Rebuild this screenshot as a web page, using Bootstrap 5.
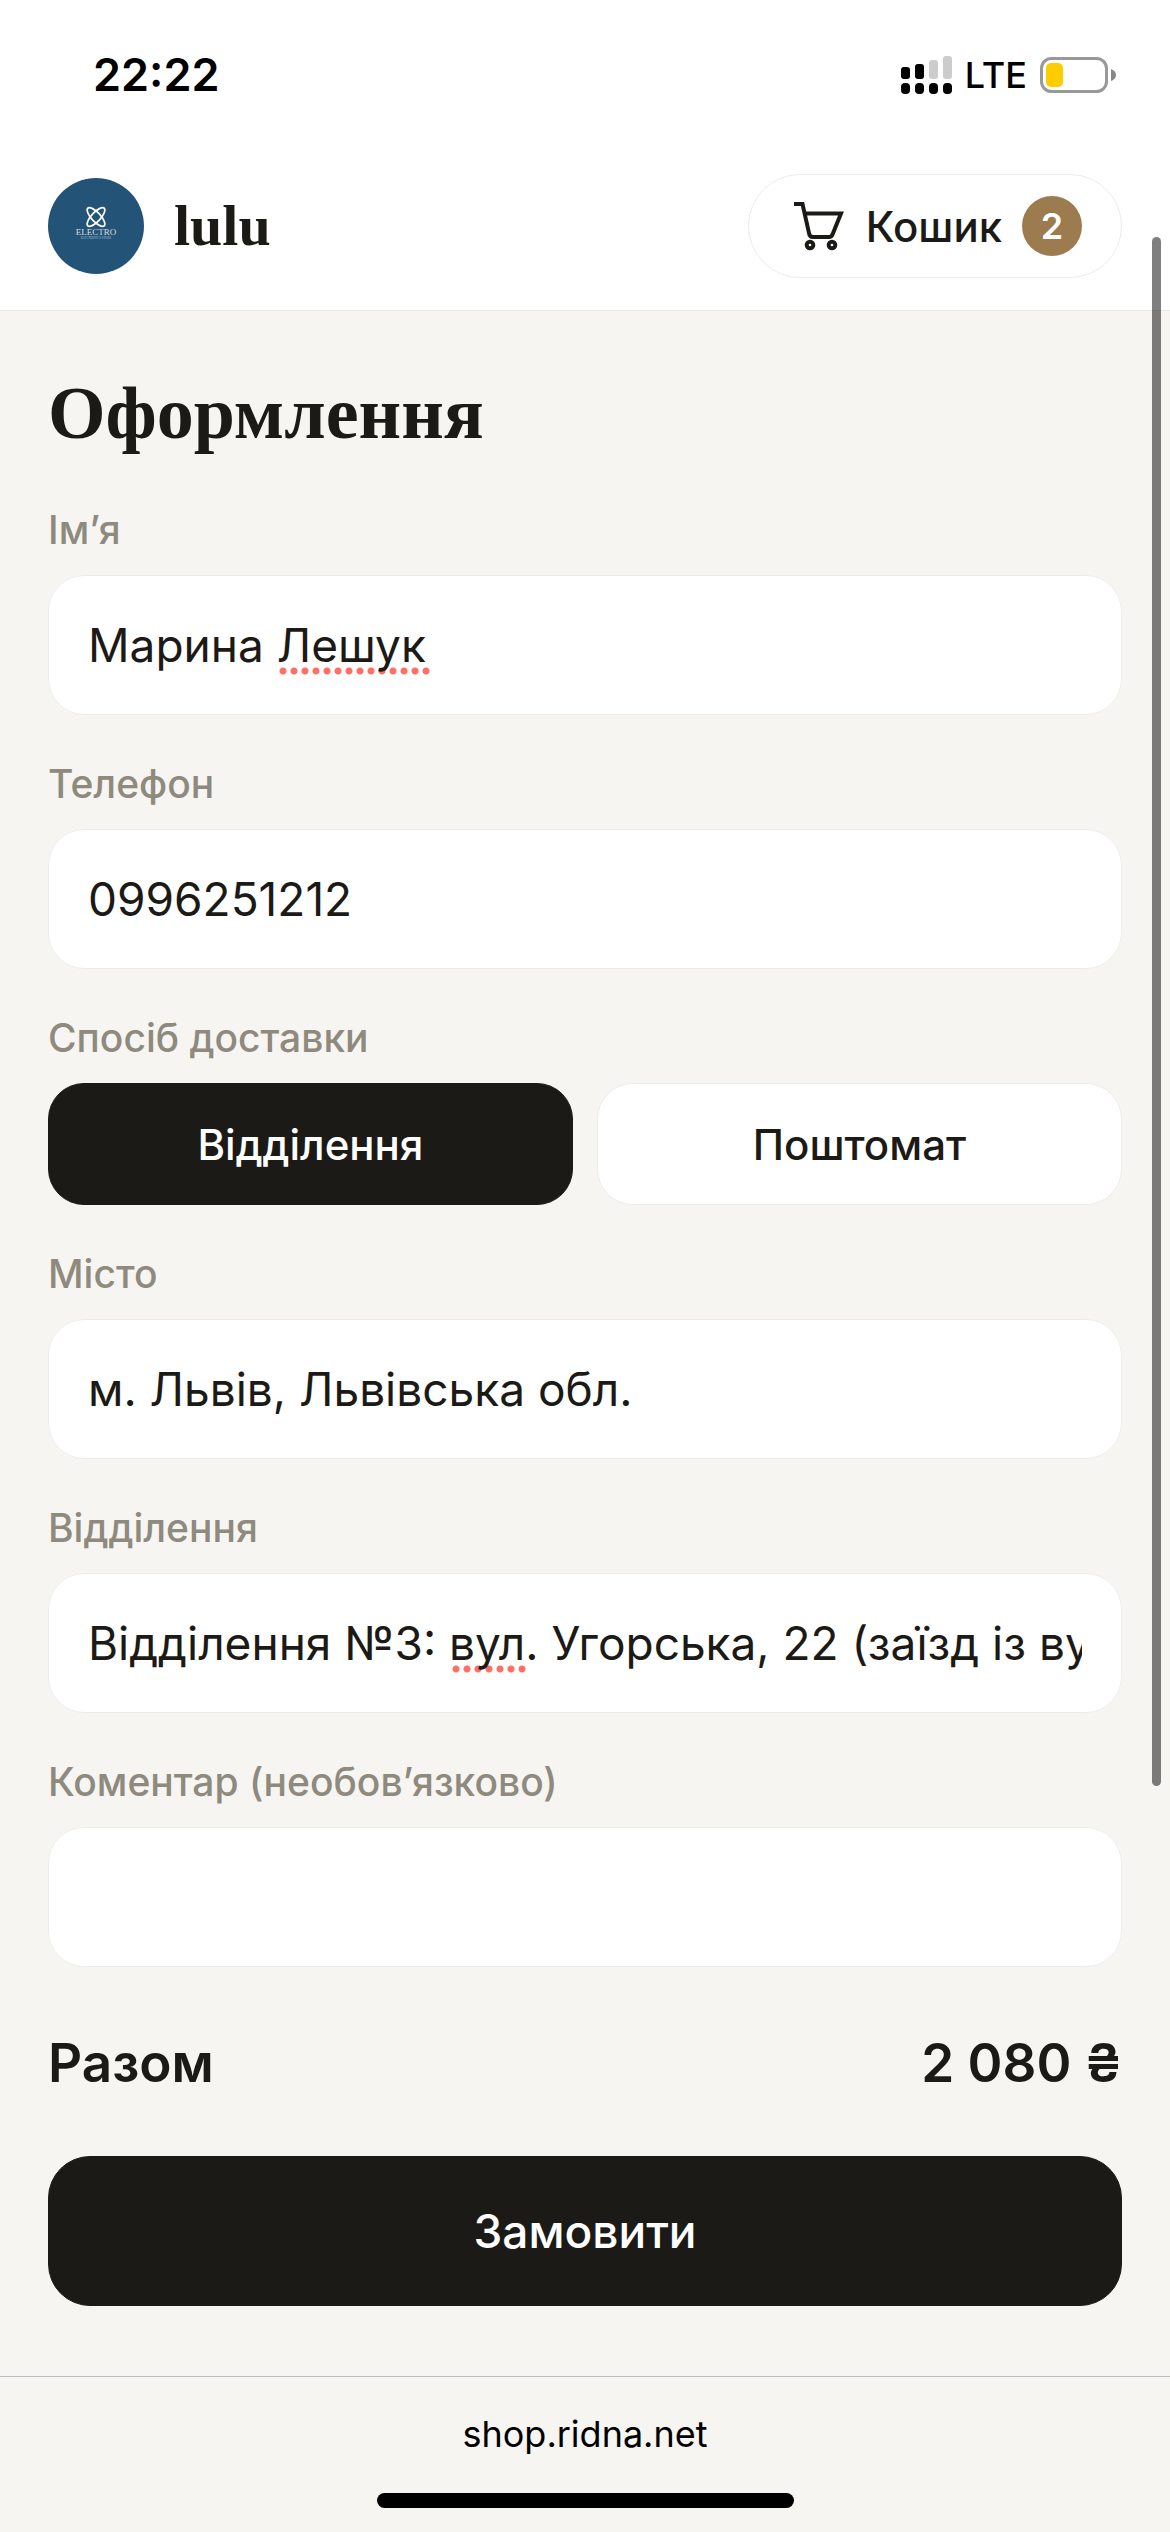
<!DOCTYPE html>
<html lang="uk">
<head>
<meta charset="utf-8">
<meta name="viewport" content="width=device-width, initial-scale=1">
<title>Оформлення – lulu</title>
<link rel="stylesheet" href="https://cdn.jsdelivr.net/npm/bootstrap@5.3.0/dist/css/bootstrap.min.css">
<style>
  :root { --ink: #1c1a16; --paper: #f6f5f1; --muted: #8e8a7d; --line: #ececec; --accent: #9c7b4e; --side: 48px; }
  body { background: var(--paper); color: var(--ink); font-family: Inter, "Noto Sans", sans-serif; font-size: 46px; }
  .status-bar { height: 150px; padding: 0 54px 0 93px; color: #000; }
  .clock { font-size: 45px; line-height: 60px; font-weight: 600; }
  .indicators { gap: 13px; }
  .network { font-size: 36px; line-height: 48px; font-weight: 500; }
  .shop-header { padding: 24px var(--side) 32px; border-bottom: 1px solid #e9e9e7; }
  .brand { gap: 30px; }
  .brand-name { font-family: "Liberation Serif", serif; font-weight: 700; font-size: 58px; line-height: 72px; color: var(--ink); }
  .cart-btn { height: 104px; padding: 0 39px 0 43px; gap: 20px; border: 1px solid var(--line); background: #fff; font-size: 42px; font-weight: 500; color: var(--ink); }
  .cart-count { width: 60px; height: 60px; background: var(--accent); font-size: 36px; font-weight: 600; color: #fff; }
  .checkout { padding: 54px var(--side) 70px; }
  .page-title { font-family: "Liberation Serif", serif; font-weight: 700; font-size: 74px; line-height: 96px; margin-bottom: 39px; }
  .field { margin-bottom: 39px; }
  .field-label { display: block; font-size: 39px; line-height: 60px; font-weight: 500; color: var(--muted); margin-bottom: 15px; }
  .field-box { background: #fff; border-radius: 36px; }
  .field-box .form-control { position: relative; height: 140px; padding: 0 39px; border: 1px solid var(--line); border-radius: 36px; background: transparent; font-size: 46px; color: var(--ink); }
  .typo { position: absolute; top: 92px; height: 8px; background: radial-gradient(circle at 4px 4px, #ff6f66 3px, transparent 4px) 0 0 / 11px 8px repeat-x; }
  .typo-surname { left: 231px; width: 151px; }
  .typo-street { left: 404px; width: 74px; }
  .choice { height: 122px; border-radius: 36px; font-size: 42px; font-weight: 500; background: #fff; border: 1px solid var(--line); color: var(--ink); }
  .btn-check:checked + .choice, .order-btn, .order-btn:hover { background: var(--ink); border-color: var(--ink); color: #fff; }
  .total { font-size: 53px; line-height: 78px; font-weight: 600; padding-top: 18px; margin-bottom: 54px; }
  .order-btn { height: 150px; border-radius: 42px; font-size: 46px; font-weight: 500; }
  .browser-bar { border-top: 1px solid #bdbdbf; height: 156px; padding: 30px 0 24px; }
  .site-link { font-size: 36px; line-height: 54px; color: #000; }
  .home-bar { width: 417px; height: 15px; background: #000; }
  .scroll-thumb { position: absolute; top: 237px; right: 9px; width: 9px; height: 1549px; background: rgba(0,0,0,.5); z-index: 5; }
</style>
</head>
<body class="d-flex flex-column min-vh-100 position-relative">
  <div class="scroll-thumb rounded-pill"></div>

  <div class="status-bar bg-white d-flex align-items-center justify-content-between">
    <span class="clock">22:22</span>
    <div class="indicators d-flex align-items-center">
      <svg width="51" height="38" viewBox="0 0 51 38" aria-hidden="true">
        <g fill="#000"><rect x="0" y="11" width="9" height="12" rx="3"/><rect x="14" y="8" width="9" height="15" rx="3"/>
        <rect x="0" y="27" width="9" height="11" rx="4"/><rect x="14" y="27" width="9" height="11" rx="4"/><rect x="28" y="27" width="9" height="11" rx="4"/><rect x="42" y="27" width="9" height="11" rx="4"/></g>
        <g fill="#ccc"><rect x="28" y="4" width="9" height="19" rx="3"/><rect x="42" y="0" width="9" height="23" rx="3"/></g>
      </svg>
      <span class="network">LTE</span>
      <svg width="76" height="36" viewBox="0 0 76 36" aria-hidden="true">
        <rect x="1.5" y="1.5" width="65" height="33" rx="10" fill="none" stroke="#999" stroke-width="3"/>
        <rect x="6" y="6" width="17" height="24" rx="5" fill="#fc0"/>
        <path d="M71 12q5 2 5 6t-5 6z" fill="#888"/>
      </svg>
    </div>
  </div>

  <header class="shop-header bg-white d-flex align-items-center justify-content-between">
    <a href="#" class="brand d-flex align-items-center text-decoration-none">
      <svg width="96" height="96" viewBox="0 0 96 96" role="img" aria-label="Electro">
        <circle cx="48" cy="48" r="48" fill="#235377"/>
        <g fill="none" stroke="#fff" stroke-width="1.7"><ellipse cx="48" cy="39" rx="12" ry="4.500" transform="rotate(47 48 39)"/><ellipse cx="48" cy="39" rx="12" ry="4.500" transform="rotate(-47 48 39)"/></g>
        <text x="48" y="57" text-anchor="middle" font-family="Liberation Serif, serif" font-size="9" fill="#d5dfe2">ELECTRO</text>
        <text x="48" y="61" text-anchor="middle" font-family="Liberation Serif, serif" font-size="3" fill="#a9bfca">ELECTRONICS STORE</text>
      </svg>
      <span class="brand-name">lulu</span>
    </a>
    <button type="button" class="cart-btn btn rounded-pill d-flex align-items-center">
      <svg width="54" height="54" viewBox="0 0 54 54" fill="none" stroke="#1c1a16" stroke-width="4" aria-hidden="true">
        <path d="M2 5h8.500L17 34q.5 4 4 4h16q2.500 0 3.500-2.500L49 14.500H12.500"/><circle cx="18" cy="46" r="3.300"/><circle cx="40" cy="46" r="3.300"/>
      </svg>
      <span>Кошик</span>
      <span class="cart-count rounded-circle d-flex align-items-center justify-content-center">2</span>
    </button>
  </header>

  <main class="checkout">
    <h1 class="page-title">Оформлення</h1>
    <form>
      <div class="field">
        <label class="field-label" for="name">Ім’я</label>
        <div class="field-box position-relative">
          <span class="typo typo-surname"></span>
          <input class="form-control" id="name" type="text" value="Марина Лешук" spellcheck="false">
        </div>
      </div>
      <div class="field">
        <label class="field-label" for="phone">Телефон</label>
        <div class="field-box"><input class="form-control" id="phone" type="tel" value="0996251212"></div>
      </div>
      <div class="field" role="group" aria-labelledby="delivery">
        <span class="field-label" id="delivery">Спосіб доставки</span>
        <div class="d-flex gap-4">
          <div class="flex-fill w-50">
            <input class="btn-check" type="radio" name="delivery" id="branch" checked>
            <label class="choice btn w-100 d-flex align-items-center justify-content-center" for="branch">Відділення</label>
          </div>
          <div class="flex-fill w-50">
            <input class="btn-check" type="radio" name="delivery" id="locker">
            <label class="choice btn w-100 d-flex align-items-center justify-content-center" for="locker">Поштомат</label>
          </div>
        </div>
      </div>
      <div class="field">
        <label class="field-label" for="city">Місто</label>
        <div class="field-box"><input class="form-control" id="city" type="text" value="м. Львів, Львівська обл."></div>
      </div>
      <div class="field">
        <label class="field-label" for="office">Відділення</label>
        <div class="field-box position-relative">
          <span class="typo typo-street"></span>
          <input class="form-control" id="office" type="text" value="Відділення №3: вул. Угорська, 22 (заїзд із вул." spellcheck="false">
        </div>
      </div>
      <div class="field">
        <label class="field-label" for="comment">Коментар (необов’язково)</label>
        <div class="field-box"><input class="form-control" id="comment" type="text"></div>
      </div>
      <div class="total d-flex justify-content-between"><span>Разом</span><span>2 080 ₴</span></div>
      <button type="submit" class="order-btn btn w-100">Замовити</button>
    </form>
  </main>

  <footer class="browser-bar d-flex flex-column align-items-center justify-content-between mt-auto">
    <a href="#" class="site-link text-decoration-none">shop.ridna.net</a>
    <div class="home-bar rounded-pill"></div>
  </footer>
<script src="https://cdn.jsdelivr.net/npm/bootstrap@5.3.0/dist/js/bootstrap.bundle.min.js"></script>
</body>
</html>
